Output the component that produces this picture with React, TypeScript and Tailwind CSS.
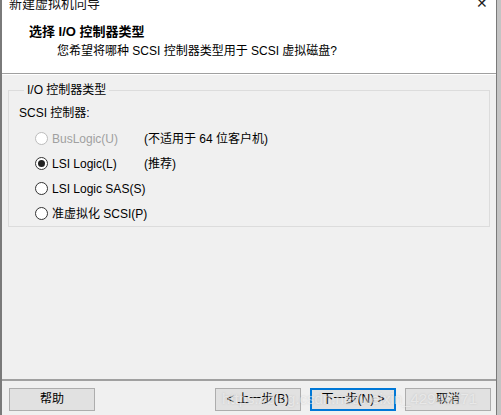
import React from "react";

const font = { fontFamily: '"Liberation Sans", "Noto Sans CJK SC", sans-serif' };

type RadioProps = {
  label: string;
  checked?: boolean;
  disabled?: boolean;
  note?: string;
};

function Radio({ label, checked, disabled, note }: RadioProps) {
  return (
    <div className="flex items-center h-[25px] whitespace-nowrap">
      <div className="flex items-center min-w-[109px] shrink-0">
        <span
          className={`w-[13px] h-[13px] shrink-0 rounded-full border flex items-center justify-center bg-white ${
            disabled ? "border-[#bcbcbc] bg-[#f5f5f5]" : "border-[#333333]"
          }`}
        >
          {checked && <span className="w-[7px] h-[7px] rounded-full bg-[#222222]" />}
        </span>
        <span className={`ml-[4px] ${disabled ? "text-[#a0a0a0]" : "text-black"}`}>{label}</span>
      </div>
      {note && <span className="text-black">{note}</span>}
    </div>
  );
}

function WinButton({ children, focused }: { children: React.ReactNode; focused?: boolean }) {
  return (
    <button
      className={`w-[86px] h-[23px] flex items-center justify-center bg-[#e1e1e1] text-black text-[12px] whitespace-nowrap ${
        focused ? "border-2 border-[#0078d7]" : "border border-[#adadad]"
      }`}
    >
      {children}
    </button>
  );
}

export default function App() {
  return (
    <div className="w-[501px] h-[415px] flex bg-[#c4c4c4] overflow-hidden text-[12px]" style={font}>
      <div className="relative w-[497px] h-full flex flex-col bg-[#f0f0f0] border-l-2 border-r border-[#7a7a7a]">
        {/* header */}
        <div className="h-[74px] bg-white border-b border-[#a0a0a0] flex flex-col">
          <div className="flex items-center justify-between h-[10px] -mt-[2px] pl-[7px] pr-[8px]">
            <span className="text-[13px] leading-none text-[#111]">新建虚拟机向导</span>
            <span className="text-[14px] leading-none text-[#222]">✕</span>
          </div>
          <div className="pl-[27px] mt-[16px] text-[13px] font-bold leading-[16px] text-black">
            选择 I/O 控制器类型
          </div>
          <div className="pl-[55px] mt-[3px] leading-[16px] text-black">
            您希望将哪种 SCSI 控制器类型用于 SCSI 虚拟磁盘?
          </div>
        </div>
        <div className="h-px bg-white" />

        {/* body */}
        <div className="flex-1 px-[6px] pt-[7px]">
          <fieldset className="border border-[#dcdcdc] h-[145px] pl-[10px]">
            <legend className="ml-[5px] px-[3px] leading-[16px] text-black">I/O 控制器类型</legend>
            <div className="mt-[7px] leading-[16px] text-black">SCSI 控制器:</div>
            <div className="mt-[5px] pl-[16px] flex flex-col">
              <Radio label="BusLogic(U)" disabled note="(不适用于 64 位客户机)" />
              <Radio label="LSI Logic(L)" checked note="(推荐)" />
              <Radio label="LSI Logic SAS(S)" />
              <Radio label="准虚拟化 SCSI(P)" />
            </div>
          </fieldset>
        </div>

        {/* footer */}
        <div className="h-[36px] border-t-2 border-[#a0a0a0] flex items-center pl-[7px] pr-[5px] pt-[2px]">
          <WinButton>帮助</WinButton>
          <div className="flex-1" />
          <div className="flex gap-[9px]">
            <WinButton>&lt; 上一步(B)</WinButton>
            <WinButton focused>下一步(N) &gt;</WinButton>
            <WinButton>取消</WinButton>
          </div>
        </div>

        <div
          className="absolute left-[220px] top-[391px] text-[15px] leading-none text-white/50 pointer-events-none whitespace-nowrap"
          style={{ textShadow: "0 0 2px rgba(140,140,140,0.35)" }}
        >
          https://blog.csdn.net/weixin_42948871
        </div>
      </div>
    </div>
  );
}
